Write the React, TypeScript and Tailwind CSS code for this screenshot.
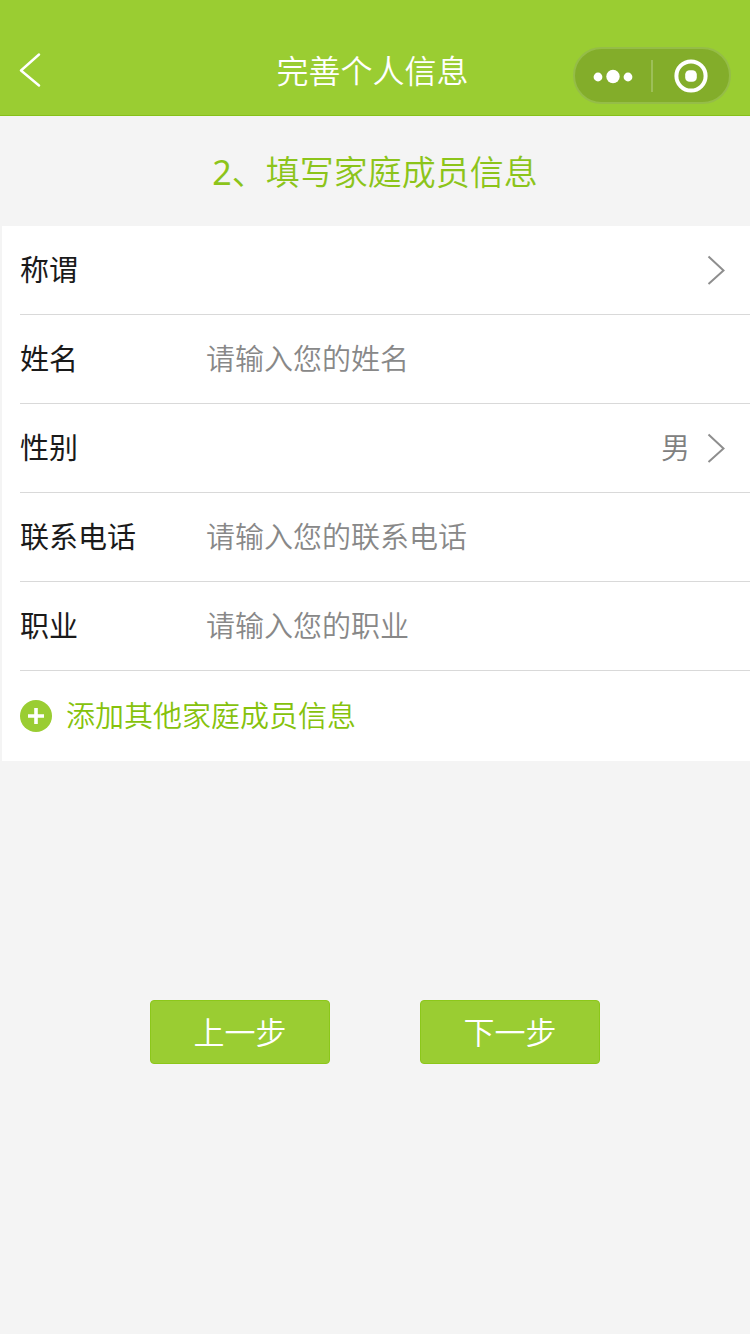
import { useState } from "react";

type TextRowProps = {
    id: string;
    label: string;
    placeholder: string;
    type?: string;
};

type SelectRowProps = {
    id: string;
    label: string;
    options: string[];
    initial: string;
};

const rowClass = "flex items-center h-[89px] pr-[25px] border-b border-[#d9d9d9]";
const labelClass = "w-[186px] shrink-0 font-normal text-[#1a1a1a]";


export default function App() {
    return (
        <div className="min-h-screen bg-[#f4f4f4] text-[29px] font-[350] font-['Noto_Sans','Noto_Sans_CJK_SC',sans-serif]">
            <Header />

            <main>
                <h2 className="pt-8 pb-[30px] text-center text-[34px] leading-[48px] text-[#8cc41a]">
                    <span className="font-normal">2</span>、填写家庭成员信息
                </h2>

                <form className="ml-0.5 pl-[18px] bg-white">
                    <SelectRow id="relation" label="称谓" options={["", "父亲", "母亲"]} initial="" />
                    <TextRow id="name" label="姓名" placeholder="请输入您的姓名" />
                    <SelectRow id="gender" label="性别" options={["男", "女"]} initial="男" />
                    <TextRow id="phone" label="联系电话" placeholder="请输入您的联系电话" type="tel" />
                    <TextRow id="job" label="职业" placeholder="请输入您的职业" />

                    <button type="button" className="flex items-center gap-[14px] w-full h-[90px] text-[#86c20c]">
                        <svg width="32" height="32" viewBox="0 0 32 32" aria-hidden="true">
                            <circle cx="16" cy="16" r="16" fill="#9acd32" />
                            <path d="M16 8v16M8 16h16" stroke="#fff" strokeWidth="3.6" />
                        </svg>
                        添加其他家庭成员信息
                    </button>
                </form>

                <div className="flex justify-center gap-[90px] mt-[239px] pb-12">
                    <StepButton text="上一步" />
                    <StepButton text="下一步" />
                </div>
            </main>
        </div>
    );
}


// Top bar with the back arrow, title and mini program capsule
const Header = () => (
    <header className="grid grid-cols-[1fr_auto_1fr] items-start pt-[47px] pb-[11px] pl-3.5 pr-[19px] bg-[#9acd32] border-b border-[#86c01a] text-white">
        <button type="button" aria-label="返回" className="flex items-center w-12 h-12">
            <svg width="28" height="36" viewBox="0 0 28 36" fill="none" stroke="currentColor" strokeWidth="2.4" strokeLinecap="round" strokeLinejoin="round" aria-hidden="true">
                <path d="M25 1.5 7 17.5 25 32.5" />
            </svg>
        </button>

        <h1 className="text-[32px] leading-[48px]">完善个人信息</h1>

        <div className="justify-self-end flex items-center w-[158px] h-[57px] rounded-full border-2 border-[#95bd47] bg-[#83ad2a]">
            <button type="button" aria-label="更多" className="flex flex-1 justify-center">
                <svg width="40" height="16" viewBox="0 0 40 16" fill="currentColor" aria-hidden="true">
                    <circle cx="5" cy="9" r="4.4" />
                    <circle cx="20" cy="8.5" r="6.7" />
                    <circle cx="35" cy="9" r="4.4" />
                </svg>
            </button>
            <span className="w-0.5 h-8 bg-[#9dbf58]" />
            <button type="button" aria-label="关闭" className="flex flex-1 justify-center">
                <svg width="34" height="34" viewBox="0 0 34 34" fill="none" aria-hidden="true">
                    <circle cx="17" cy="17" r="14.6" stroke="currentColor" strokeWidth="4" />
                    <rect x="11.2" y="11.2" width="11.6" height="11.6" rx="4.4" fill="currentColor" />
                </svg>
            </button>
        </div>
    </header>
);


const TextRow = ({ id, label, placeholder, type = "text" }: TextRowProps) => (
    <div className={rowClass}>
        <label htmlFor={id} className={labelClass}>{label}</label>
        <input
            id={id}
            type={type}
            placeholder={placeholder}
            className="flex-1 min-w-0 h-full pb-0.5 outline-none text-[#1a1a1a] placeholder:text-[#888888]"
        />
    </div>
);


const SelectRow = ({ id, label, options, initial }: SelectRowProps) => {
    const [value, setValue] = useState(initial);

    return (
        <div className={rowClass}>
            <label htmlFor={id} className={labelClass}>{label}</label>
            <select
                id={id}
                value={value}
                onChange={(e) => setValue(e.target.value)}
                className="flex-1 min-w-0 h-full appearance-none outline-none bg-transparent text-[#808080] [text-align-last:right]"
            >
                {options.map((option) => (
                    <option key={option} value={option}>{option}</option>
                ))}
            </select>
            <svg className="ml-[17px] text-[#8e8e8e]" width="18" height="30" viewBox="0 0 18 30" fill="none" stroke="currentColor" strokeWidth="2" aria-hidden="true">
                <path d="M1.5 1.5 16.5 15.5 1.5 29" />
            </svg>
        </div>
    );
};


const StepButton = ({ text }: { text: string }) => (
    <button type="button" className="w-[180px] h-16 rounded border border-[#8cc71a] bg-[#9acd32] text-[31px] leading-none text-white">
        {text}
    </button>
);
